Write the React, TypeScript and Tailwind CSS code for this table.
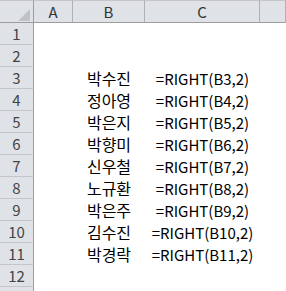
import React from "react";

const names = ["", "", "박수진", "정아영", "박은지", "박향미", "신우철", "노규환", "박은주", "김수진", "박경락", "", ""];

const font = { fontFamily: '"Noto Sans CJK KR", "Malgun Gothic", sans-serif' };

export default function App() {
  const rows = Array.from({ length: 13 }, (_, i) => i + 1);
  return (
    <div className="w-[286px] h-[291px] overflow-hidden bg-white" style={font}>
      <div className="grid grid-cols-[34px_39px_72px_115px_1fr]">
        {/* column header strip */}
        <div className="relative h-[23px] bg-[#dfe3e8] border-t border-b border-r border-t-[#c6c6c6] border-b-[#9d9d9d] border-r-[#9d9d9d]">
          <svg className="absolute left-[18px] top-[8px]" width="12" height="12" viewBox="0 0 12 12">
            <polygon points="12,0 12,12 0,12" fill="#bfc3c8" />
          </svg>
        </div>
        {["A", "B", "C", ""].map((c, i) => (
          <div
            key={i}
            className="h-[23px] bg-[#dfe3e8] border-t border-b border-r border-t-[#c6c6c6] border-b-[#9d9d9d] border-r-[#aeb1b5] flex items-center justify-center text-[15px] text-[#333] leading-none"
          >
            {c}
          </div>
        ))}
        {rows.map((r) => (
          <React.Fragment key={r}>
            <div className="h-[22px] bg-[#dfe3e8] border-b border-r border-b-[#c3c5c8] border-r-[#9d9d9d] flex items-center justify-center text-[15px] text-[#444] leading-none">
              {r < 13 ? r : ""}
            </div>
            <div className="h-[22px]" />
            <div className="h-[22px] flex items-center justify-center text-[16px] text-black leading-none whitespace-nowrap">
              {names[r - 1]}
            </div>
            <div className="h-[22px] flex items-center justify-center text-[15px] text-black leading-none whitespace-nowrap">
              {names[r - 1] ? `=RIGHT(B${r},2)` : ""}
            </div>
            <div className="h-[22px]" />
          </React.Fragment>
        ))}
      </div>
    </div>
  );
}
